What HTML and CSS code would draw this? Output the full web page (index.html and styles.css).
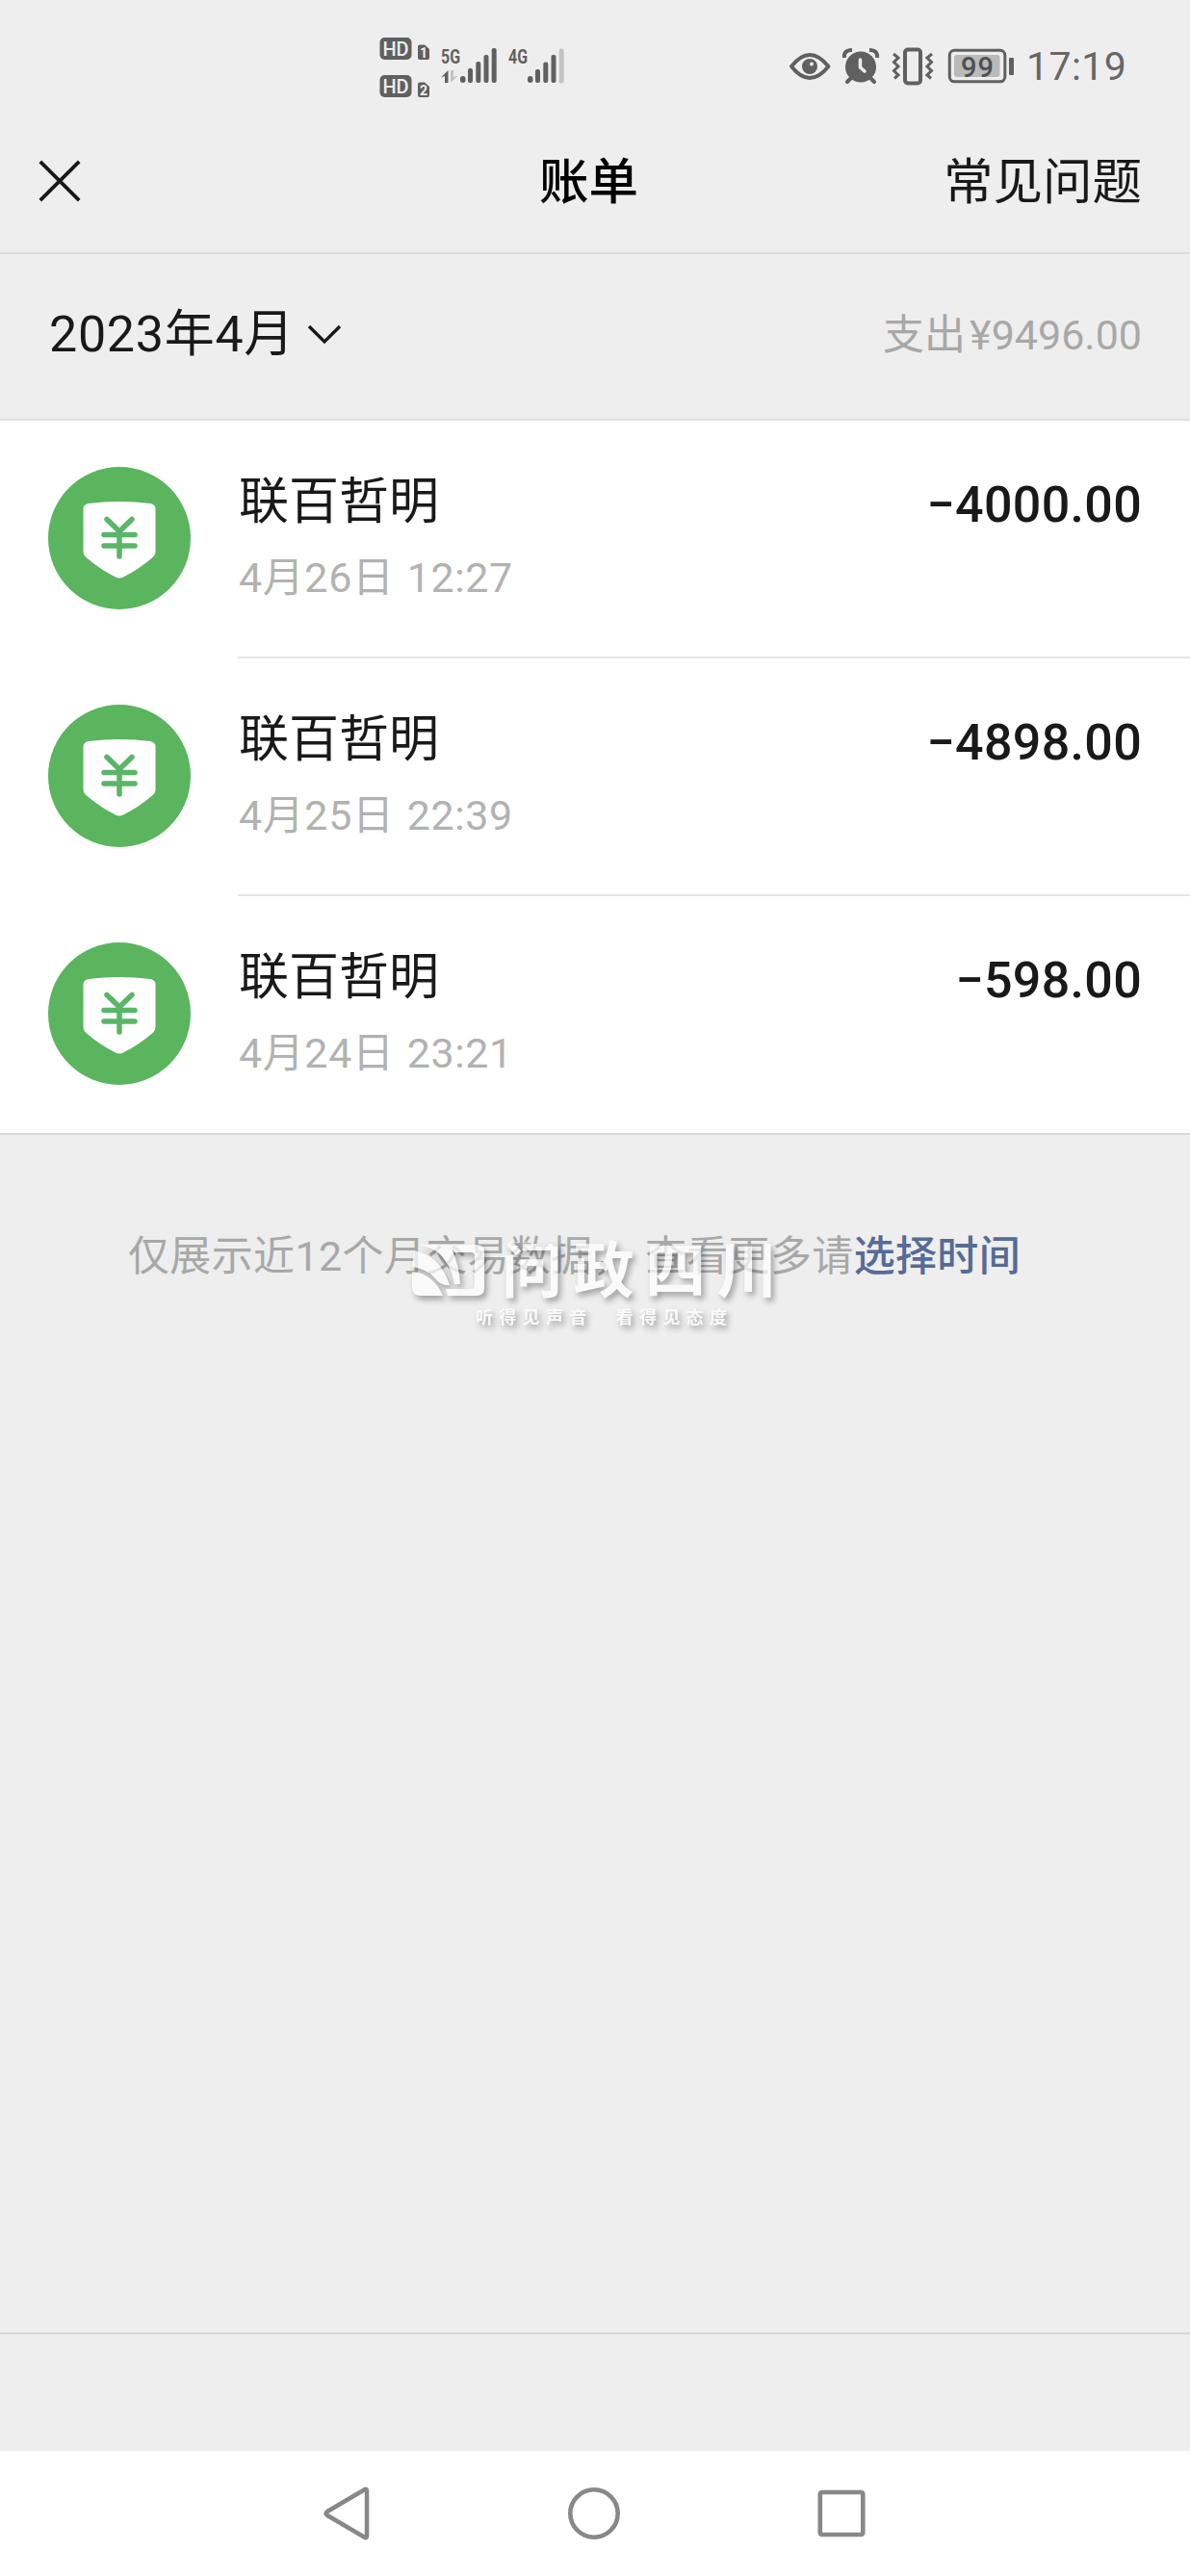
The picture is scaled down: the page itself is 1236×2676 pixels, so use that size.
FILE: index.html
```html
<!DOCTYPE html>
<html lang="zh-CN">
<head>
<meta charset="utf-8">
<title>账单</title>
<link rel="stylesheet" href="styles.css">
</head>
<body>
<svg class="defs" width="0" height="0">
  <symbol id="pay" viewBox="0 0 148 148">
    <circle cx="74" cy="74" r="74" fill="#5ab55e"/>
    <path d="M42 38Q74 34 106 38Q111.500 39 111.500 43.500V87.500Q111.500 91.500 108 94.500Q94 106.500 78 114.500Q74 116.500 70 114.500Q54 106.500 40 94.500Q36.500 91.500 36.500 87.500V43.500Q36.500 39 42 38Z" fill="#fff"/>
    <path d="M61 54.500L74 67L87 54.500M74 67V93M58 70.500H90M58 82H90" fill="none" stroke="#5ab568" stroke-width="5.500" stroke-linecap="round" stroke-linejoin="round"/>
  </symbol>
</svg>
<div class="screen">
  <div class="status">
    <svg class="signals" width="200" height="70" viewBox="390 35 200 70">
      <g fill="#606060">
        <rect x="394.500" y="39" width="33" height="23" rx="5"/>
        <rect x="394.500" y="78" width="33" height="23" rx="5"/>
        <path d="M436 46.500H441L446 51V60Q446 62 444 62H436Q434 62 434 60V48.500Q434 46.500 436 46.500Z"/>
        <path d="M436 85.500H441L446 90V99Q446 101 444 101H436Q434 101 434 99V87.500Q434 85.500 436 85.500Z"/>
        <path d="M465.500 73V86H462V79L458 80.500Z"/>
        <rect x="478" y="79" width="5.500" height="7" rx="2.700"/>
        <rect x="486" y="71" width="5" height="15" rx="2"/>
        <rect x="494.300" y="64" width="5" height="22" rx="2"/>
        <rect x="502.500" y="57" width="5" height="29" rx="2"/>
        <rect x="510.700" y="50" width="5" height="36" rx="2"/>
        <rect x="548" y="79" width="5.500" height="7" rx="2.700"/>
        <rect x="556" y="72" width="5" height="14" rx="2"/>
        <rect x="564.300" y="64.500" width="5" height="21.500" rx="2"/>
        <rect x="572.500" y="57" width="5" height="29" rx="2"/>
      </g>
      <rect x="580.700" y="50.500" width="5" height="36" rx="2" fill="#c4c4c4"/>
      <path d="M468 73H471V80L475.500 79L468 86Z" fill="#c4c4c4"/>
      <g class="hd">
        <text x="397.500" y="58" textLength="27">HD</text>
        <text x="397.500" y="97" textLength="27">HD</text>
      </g>
      <g class="sim">
        <text x="436" y="60">1</text>
        <text x="436" y="99">2</text>
      </g>
      <g class="net">
        <text x="458" y="66" textLength="20" lengthAdjust="spacingAndGlyphs">5G</text>
        <text x="528" y="66" textLength="20" lengthAdjust="spacingAndGlyphs">4G</text>
      </g>
    </svg>
    <div class="status-right">
      <svg width="236" height="42" viewBox="818 48 236 42">
        <path d="M822 69Q841 45 860.500 69Q841 93 822 69Z" fill="none" stroke="#606060" stroke-width="4" stroke-linejoin="round"/>
        <circle cx="841" cy="69" r="8" fill="#606060"/>
        <circle cx="843" cy="66.500" r="2" fill="#eee"/>
        <circle cx="894" cy="69.500" r="16" fill="#606060"/>
        <path d="M885 80L880 85M903 80L908 85" stroke="#606060" stroke-width="4" stroke-linecap="round"/>
        <path d="M877 60Q876 52 885 52M911 60Q912 52 903 52" fill="none" stroke="#606060" stroke-width="4"/>
        <path d="M893.500 62V70L898 74" fill="none" stroke="#eee" stroke-width="3.500" stroke-linecap="round"/>
        <rect x="940" y="51.500" width="16" height="35" rx="3" fill="none" stroke="#606060" stroke-width="4"/>
        <path d="M928 56L933 60L928.500 64.500L933 69L928.500 73.500L933 78L929 81.500M968 56L963 60L967.500 64.500L963 69L967.500 73.500L963 78L967 81.500" fill="none" stroke="#606060" stroke-width="3"/>
        <rect x="986.300" y="52.300" width="57.500" height="32.500" rx="5" fill="none" stroke="#606060" stroke-width="3"/>
        <rect x="991" y="57" width="47.500" height="23" rx="3" fill="#bababa"/>
        <rect x="1048" y="60" width="5" height="18" rx="1" fill="#606060"/>
        <text class="battery" x="998" y="80" textLength="34">99</text>
      </svg>
      <span class="time">17:19</span>
    </div>
  </div>
  <header class="header">
    <svg width="44" height="44" viewBox="0 0 44 44"><path d="M1.800 1.800L42.200 42.200M42.200 1.800L1.800 42.200" stroke="#191919" stroke-width="3.800"/></svg>
    <h1 class="title">账单</h1>
    <span class="faq">常见问题</span>
  </header>
  <section class="summary">
    <div class="month"><span>2023年4月</span><svg width="36" height="22" viewBox="0 0 36 22"><path d="M2 2L18 18L34 2" fill="none" stroke="#191919" stroke-width="3.300"/></svg></div>
    <div class="spent">支出<span class="sum">¥9496.00</span></div>
  </section>
  <main class="list">
    <article class="row">
      <svg class="avatar"><use href="#pay"/></svg>
      <div class="detail"><div><div class="name">联百哲明</div><div class="date">4月26日 12:27</div></div><div class="amount">−4000.00</div></div>
    </article>
    <article class="row">
      <svg class="avatar"><use href="#pay"/></svg>
      <div class="detail"><div><div class="name">联百哲明</div><div class="date">4月25日 22:39</div></div><div class="amount">−4898.00</div></div>
    </article>
    <article class="row">
      <svg class="avatar"><use href="#pay"/></svg>
      <div class="detail"><div><div class="name">联百哲明</div><div class="date">4月24日 23:21</div></div><div class="amount">−598.00</div></div>
    </article>
  </main>
  <section class="more">
    <p class="hint">仅展示近12个月交易数据， 查看更多请<a class="link">选择时间</a></p>
    <div class="watermark">
      <div class="brand">
        <svg width="80" height="60" viewBox="0 0 80 60" fill="#fff">
          <path d="M8 3H68Q76 3 76 11V48Q76 56 68 56H38L36 49H62Q66 49 66 45V15Q66 11 62 11H46L42 7Q50 24 51 44L45 44Q42 24 28 11Q19 5 8 3Z"/>
          <path d="M3 9Q30 14 40 45Q31 46 25 38Q16 28 1 26Z"/>
          <path d="M1 31Q23 33 33 56H10Q1 56 1 47Z"/>
        </svg>
        <span>问政四川</span>
      </div>
      <div class="slogan">听得见声音　看得见态度</div>
    </div>
  </section>
  <div class="toolbar"></div>
  <nav class="nav">
    <svg width="48" height="56" viewBox="0 0 48 56"><path d="M43 3Q45 2 45 5V51Q45 54 43 53L4 30Q1 28 4 26Z" fill="none" stroke="#888" stroke-width="4.500"/></svg>
    <svg width="56" height="56" viewBox="0 0 56 56"><circle cx="28" cy="28" r="24.700" fill="none" stroke="#888" stroke-width="4.600"/></svg>
    <svg width="50" height="50" viewBox="0 0 50 50"><rect x="2.800" y="3" width="44.500" height="44" rx="2" fill="none" stroke="#888" stroke-width="4.600"/></svg>
  </nav>
</div>
</body>
</html>
```
FILE: styles.css
```css
* { box-sizing: border-box; }
body {
  margin: 0;
  font-family: Roboto, "Noto Sans CJK SC", sans-serif;
  color: #191919;
  background: #eee;
}
svg { display: block; flex: none; }
.defs { position: absolute; }
.screen {
  width: 1236px;
  height: 2676px;
  display: flex;
  flex-direction: column;
  overflow: hidden;
}
.status {
  height: 112px;
  padding: 35px 68px 7px 390px;
  display: flex;
  justify-content: space-between;
}
.status-right { display: flex; align-items: center; height: 68px; gap: 12px; }
.time { font-size: 41px; line-height: 42px; color: #666; width: 102px; white-space: nowrap; letter-spacing: .4px; }
.hd text { font: 500 20px Roboto, sans-serif; fill: #eee; }
.sim text { font: 700 14px Roboto, sans-serif; fill: #eee; }
.net text { font: 700 21px Roboto, sans-serif; fill: #606060; }
.battery { font: 500 29px Roboto, sans-serif; fill: #505050; }
.header {
  height: 152px;
  padding: 0 50px 0 40px;
  display: grid;
  grid-template-columns: 1fr auto 1fr;
  align-items: center;
  border-bottom: 2px solid #dedede;
}
.header svg { margin-top: 2px; }
.title { margin: 0 3px 0 0; padding-top: 6px; font-size: 51.5px; line-height: 60px; font-weight: 500; color: #000; }
.faq { padding-top: 6px; font-size: 51.5px; line-height: 60px; justify-self: end; }
.summary {
  height: 173px;
  padding: 0 50px 3px 51px;
  display: flex;
  justify-content: space-between;
  align-items: center;
  border-bottom: 2px solid #e0e0e0;
}
.month { display: flex; align-items: center; gap: 13px; font-size: 52px; line-height: 70px; letter-spacing: .7px; }
.spent { font-size: 43px; line-height: 60px; color: #a8a8a8; }
.sum { margin-left: 4px; }
.list { background: #fff; height: 742px; border-bottom: 2px solid #d8d8d8; }
.row { height: 247px; display: flex; padding-left: 50px; }
.avatar { width: 148px; height: 148px; margin-top: 48px; }
.detail {
  flex: 1;
  margin-left: 49px;
  padding: 49px 50px 0 1px;
  display: flex;
  justify-content: space-between;
  border-bottom: 2px solid #e6e6e6;
}
.row:last-child .detail { border-bottom: 0; }
.name { font-size: 52px; line-height: 72px; }
.date { font-size: 43px; line-height: 60px; margin-top: 12px; color: #b2b2b2; letter-spacing: .6px; word-spacing: 2px; }
.amount { font-size: 52px; line-height: 77px; font-weight: 500; letter-spacing: .3px; }
.more { flex: 1; position: relative; padding: 94px 0 0 133px; }
.hint { margin: 0; font-size: 43px; line-height: 64px; color: #a8a8a8; white-space: nowrap; letter-spacing: .35px; }
.link { color: #576b95; font-weight: 500; }
/* Watermark stamped over the hint line */
.watermark {
  position: absolute;
  left: 427px;
  top: 110px;
  color: #fff;
  opacity: .72;
  filter: drop-shadow(3px 4px 3px rgba(0, 0, 0, .45));
}
.brand { display: flex; align-items: center; gap: 14px; font-size: 63px; line-height: 60px; font-weight: 700; letter-spacing: 11.500px; white-space: nowrap; }
.brand span { padding-top: 2px; }
.slogan { margin: 6px 0 0 67px; font-family: "Liberation Serif", "Noto Sans CJK SC", serif; font-size: 18px; line-height: 24px; font-weight: 700; letter-spacing: 6.300px; white-space: nowrap; }
.toolbar { height: 123px; border-top: 2px solid #d6d6d6; }
.nav {
  height: 130px;
  padding: 0 337px 0 336px;
  display: flex;
  justify-content: space-between;
  align-items: center;
  background: #fff;
}
```
